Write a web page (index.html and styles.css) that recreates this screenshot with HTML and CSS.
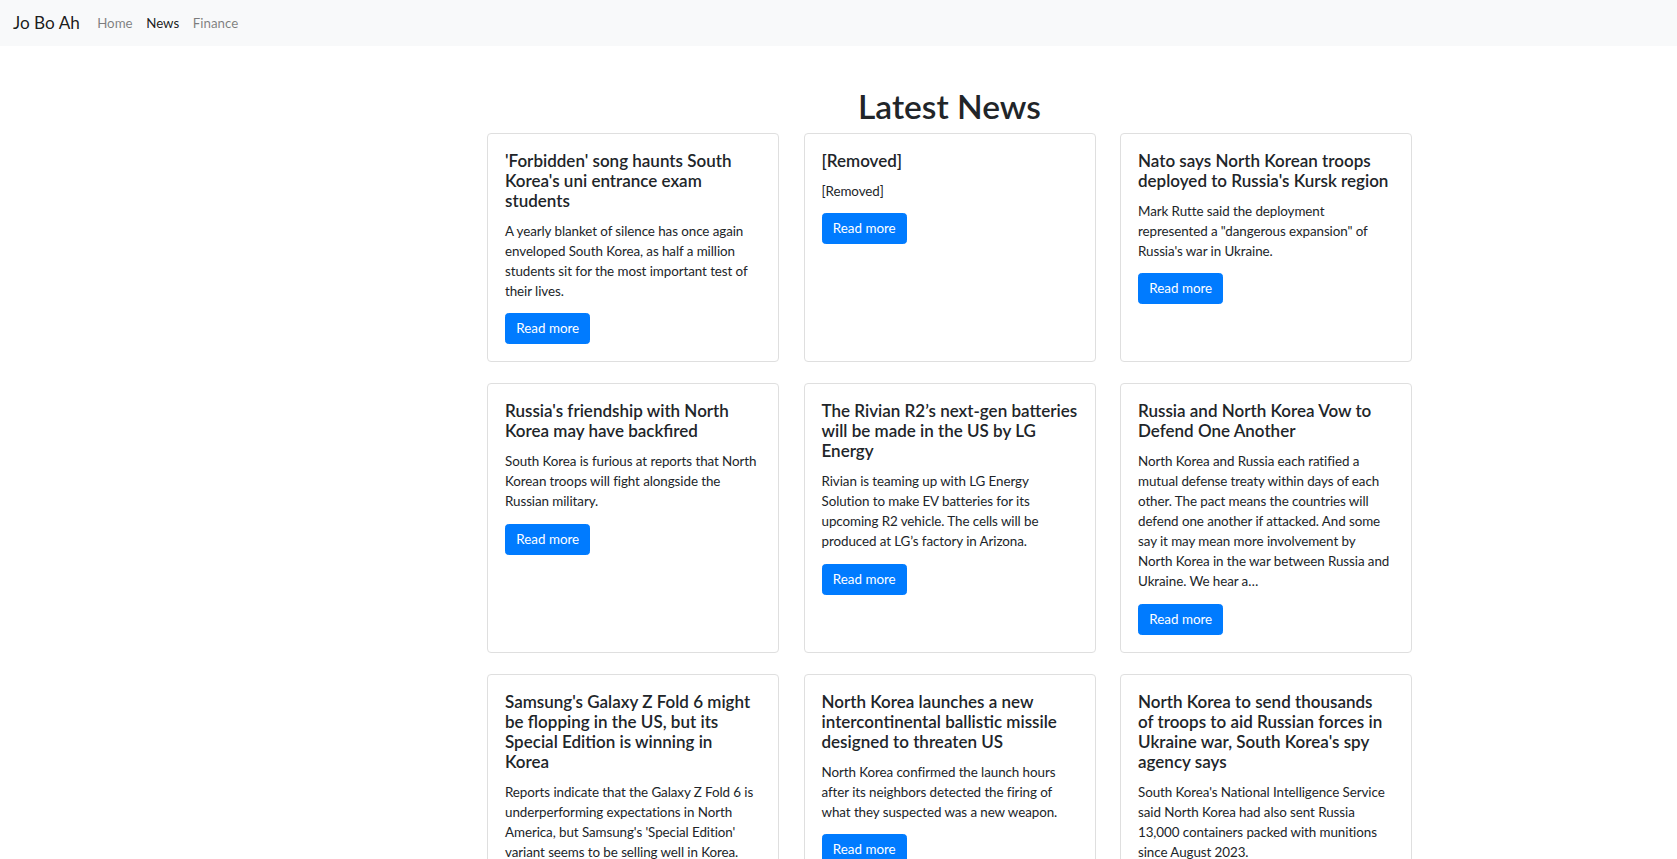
FILE: index.html
```html
<!DOCTYPE html>
<html lang="en">
<head>
<meta charset="utf-8">
<title>Jo Bo Ah - News</title>
<link rel="stylesheet" href="styles.css">
</head>
<body>
<nav class="navbar">
  <a class="brand" href="#">Jo Bo Ah</a>
  <ul class="nav-links">
    <li><a class="nav-link" href="#">Home</a></li>
    <li><a class="nav-link active" href="#">News</a></li>
    <li><a class="nav-link" href="#">Finance</a></li>
  </ul>
</nav>
<main class="page">
  <h1 class="page-title">Latest News</h1>
  <div class="news-grid">
    <div class="card">
      <h5 class="card-title">'Forbidden' song haunts South Korea's uni entrance exam students</h5>
      <p class="card-text">A yearly blanket of silence has once again enveloped South Korea, as half a million students sit for the most important test of their lives.</p>
      <a class="btn" href="#">Read more</a>
    </div>
    <div class="card">
      <h5 class="card-title">[Removed]</h5>
      <p class="card-text">[Removed]</p>
      <a class="btn" href="#">Read more</a>
    </div>
    <div class="card">
      <h5 class="card-title">Nato says North Korean troops deployed to Russia's Kursk region</h5>
      <p class="card-text">Mark Rutte said the deployment represented a "dangerous expansion" of Russia's war in Ukraine.</p>
      <a class="btn" href="#">Read more</a>
    </div>
    <div class="card">
      <h5 class="card-title">Russia's friendship with North Korea may have backfired</h5>
      <p class="card-text">South Korea is furious at reports that North Korean troops will fight alongside the Russian military.</p>
      <a class="btn" href="#">Read more</a>
    </div>
    <div class="card">
      <h5 class="card-title">The Rivian R2’s next-gen batteries will be made in the US by LG Energy</h5>
      <p class="card-text">Rivian is teaming up with LG Energy Solution to make EV batteries for its upcoming R2 vehicle. The cells will be produced at LG’s factory in Arizona.</p>
      <a class="btn" href="#">Read more</a>
    </div>
    <div class="card">
      <h5 class="card-title">Russia and North Korea Vow to Defend One Another</h5>
      <p class="card-text">North Korea and Russia each ratified a mutual defense treaty within days of each other. The pact means the countries will defend one another if attacked. And some say it may mean more involvement by North&nbsp;Korea in the war between Russia and Ukraine. We hear a…</p>
      <a class="btn" href="#">Read more</a>
    </div>
    <div class="card">
      <h5 class="card-title">Samsung's Galaxy Z Fold 6 might be flopping in the US, but its Special Edition is winning in<br>Korea</h5>
      <p class="card-text">Reports indicate that the Galaxy Z Fold 6 is underperforming expectations in North America, but Samsung's 'Special Edition' variant seems to be selling well in Korea.</p>
      <a class="btn" href="#">Read more</a>
    </div>
    <div class="card">
      <h5 class="card-title">North Korea launches a new intercontinental ballistic missile designed to threaten US</h5>
      <p class="card-text">North Korea confirmed the launch hours after its neighbors detected the firing of what they suspected was a new weapon.</p>
      <a class="btn" href="#">Read more</a>
    </div>
    <div class="card">
      <h5 class="card-title">North Korea to send thousands of&nbsp;troops to aid Russian forces in Ukraine war, South Korea's spy agency says</h5>
      <p class="card-text">South Korea's National Intelligence Service said North Korea had also sent Russia 13,000 containers packed with munitions since August 2023.</p>
      <a class="btn" href="#">Read more</a>
    </div>
  </div>
</main>
</body>
</html>
```
FILE: styles.css
```css
* {
  box-sizing: border-box;
}

body {
  margin: 0;
  font-family: "Segoe UI", Lato, "Liberation Sans", sans-serif;
  font-size: 13.4px;
  line-height: 20px;
  color: #212529;
  background: #fff;
}

a {
  text-decoration: none;
}

.navbar {
  height: 45.5px;
  background: #f8f9fa;
  display: flex;
  align-items: center;
  padding: 0 13px;
}

.brand {
  font-size: 17.2px;
  line-height: 26px;
  color: rgba(0, 0, 0, 0.9);
  margin-right: 10.5px;
}

.nav-links {
  list-style: none;
  margin: 0;
  padding: 0;
  display: flex;
}

.nav-link {
  display: block;
  padding: 0 6.8px;
  font-size: 13.3px;
  line-height: 20px;
  color: rgba(0, 0, 0, 0.5);
}

.nav-link.active {
  color: rgba(0, 0, 0, 0.9);
}

.page {
  width: 925px;
  margin-left: 487px;
  padding-bottom: 40px;
}

.page-title {
  margin: 40.8px 0 6.4px;
  font-size: 33.5px;
  line-height: 40px;
  font-weight: 600;
  text-align: center;
}

.news-grid {
  display: grid;
  grid-template-columns: repeat(3, 292px);
  column-gap: 24.5px;
  row-gap: 21px;
}

.card {
  border: 1px solid #dfdfdf;
  border-radius: 4px;
  padding: 17px;
  background: #fff;
  display: flex;
  flex-direction: column;
  align-items: flex-start;
}

.card-title {
  margin: 0 0 10px;
  font-size: 17px;
  line-height: 20px;
  font-weight: 600;
}

.card-text {
  margin: 0 0 12.5px;
  letter-spacing: -0.08px;
}

.btn {
  display: inline-block;
  background: #007bff;
  border: 1px solid #007bff;
  border-radius: 3.5px;
  color: #fff;
  font-size: 13.4px;
  line-height: 19px;
  padding: 5px 10.3px;
}
```
